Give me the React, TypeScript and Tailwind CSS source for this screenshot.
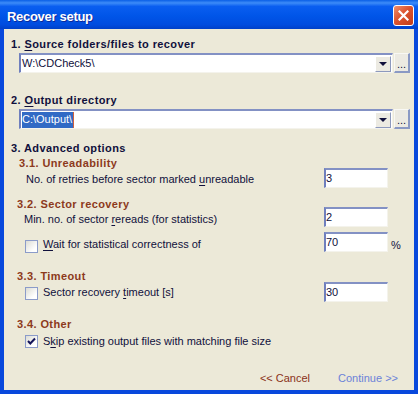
import type { ReactNode } from 'react';

const sans = "font-['Liberation_Sans',Arial,sans-serif]";
const sunken =
  'border-t-2 border-l-2 border-r border-b border-t-[#8391c4] border-l-[#6f7fbd] border-r-[#f4f3ec] border-b-[#f4f3ec] bg-white';

function U({ children }: { children: ReactNode }) {
  return <span className="underline underline-offset-[2px]">{children}</span>;
}

function Field({ value }: { value: string }) {
  return (
    <div className={`${sunken} w-[64px] h-[20px] flex items-center text-[#10103c]`}>{value}</div>
  );
}

function Check({ checked }: { checked?: boolean }) {
  return (
    <div className="w-[13px] h-[13px] shrink-0 border border-[#8b9bc9] bg-[linear-gradient(135deg,#dcdcd4,#ffffff_75%)] flex items-center justify-center">
      {checked && (
        <svg width="9" height="9" viewBox="0 0 9 9">
          <path d="M1 4 L3.3 6.5 L8 1.5" stroke="#14145a" strokeWidth="2" fill="none" />
        </svg>
      )}
    </div>
  );
}

function Combo({ children }: { children: ReactNode }) {
  return (
    <div className="flex ml-[15px] mr-[4px] h-[20px] gap-[1px]">
      <div className={`${sunken} flex-1 flex items-center`}>
        <div className="flex-1 flex items-center h-full pl-[1px]">{children}</div>
        <div className="w-[16px] h-[16px] mr-[1px] bg-[#eceae2] border-t border-l border-r border-b border-t-white border-l-white border-r-[#8d99bd] border-b-[#8d99bd] flex items-center justify-center">
          <div className="w-0 h-0 border-l-[4px] border-r-[4px] border-t-[4px] border-l-transparent border-r-transparent border-t-[#10103c]" />
        </div>
      </div>
      <div className="w-[16px] h-[20px] bg-[#eceae2] border-t border-l border-r-2 border-b-2 border-t-[#f8f8f4] border-l-[#f8f8f4] border-r-[#8a99c4] border-b-[#8a99c4] flex items-end justify-center pb-[2px] leading-[10px] text-[#10103c]">
        ...
      </div>
    </div>
  );
}

export default function App() {
  return (
    <div className={`${sans} w-[418px] h-[394px] bg-[#0848dc] flex flex-col text-[11px] leading-[13px] text-[#10103c]`}>
      <div className="h-[29px] flex items-start bg-[linear-gradient(to_bottom,#0a5fe6_0%,#3d8cf8_10%,#0a5ef0_22%,#0055e8_55%,#004cdf_85%,#0040c8_100%)]">
        <div className="mt-[9px] ml-[7px] text-[13px] leading-[16px] font-bold tracking-[-0.3px] text-white [text-shadow:1px_1px_0_#0b2a9a]">
          Recover setup
        </div>
        <div className="ml-auto mr-[4px] mt-[5px] w-[21px] h-[21px] rounded-[3px] border border-white bg-[linear-gradient(135deg,#f0906c,#dc5430_45%,#c23c18)] flex items-center justify-center">
          <svg width="11" height="11" viewBox="0 0 11 11">
            <path d="M1.5 1.5 L9.5 9.5 M9.5 1.5 L1.5 9.5" stroke="white" strokeWidth="2.2" strokeLinecap="square" />
          </svg>
        </div>
      </div>

      <div className="mx-[4px] h-[361px] bg-[#ece9d8] flex flex-col">
        <div className="mt-[9px] ml-[7px] font-bold tracking-[0.4px]">
          1. <U>S</U>ource folders/files to recover
        </div>
        <div className="mt-[2px]">
          <Combo>W:\CDCheck5\</Combo>
        </div>

        <div className="mt-[21px] ml-[7px] font-bold tracking-[0.4px]">
          2. <U>O</U>utput directory
        </div>
        <div className="mt-[2px]">
          <Combo>
            <span className="bg-[#316ac5] text-white h-[16px] flex items-center pr-[1px]">C:\Output\</span>
            <span className="w-[1px] h-[16px] bg-[#d0603c]" />
          </Combo>
        </div>

        <div className="mt-[13px] ml-[7px] font-bold tracking-[0.4px]">3. Advanced options</div>
        <div className="mt-[2px] ml-[15px] h-[10px] font-bold tracking-[0.4px] text-[#8c3a1c]">3.1. Unreadability</div>
        <div className="mt-[1px] h-[20px] flex">
          <div className="flex-1 pl-[22px] pt-[5px]">
            No. of retries before sector marked <U>u</U>nreadable
          </div>
          <Field value="3" />
          <div className="w-[26px]" />
        </div>

        <div className="mt-[10px] ml-[13px] h-[9px] font-bold tracking-[0.4px] text-[#8c3a1c]">3.2. Sector recovery</div>
        <div className="h-[20px] flex">
          <div className="flex-1 pl-[20px] pt-[6px]">
            Min. no. of sector <U>r</U>ereads (for statistics)
          </div>
          <Field value="2" />
          <div className="w-[26px]" />
        </div>
        <div className="mt-[5px] h-[20px] flex">
          <div className="flex-1 flex items-start pl-[21px]">
            <div className="mt-[8px]">
              <Check />
            </div>
            <div className="ml-[5px] pt-[6px]">
              <U>W</U>ait for statistical correctness of
            </div>
          </div>
          <Field value="70" />
          <div className="w-[26px] pl-[3px] pt-[7px]">%</div>
        </div>

        <div className="mt-[18px] ml-[13px] h-[12px] font-bold tracking-[0.4px] text-[#8c3a1c]">3.3. Timeout</div>
        <div className="h-[20px] flex">
          <div className="flex-1 flex items-start pl-[21px]">
            <div className="mt-[5px]">
              <Check />
            </div>
            <div className="ml-[5px] pt-[4px]">
              Sector recovery <U>t</U>imeout [s]
            </div>
          </div>
          <Field value="30" />
          <div className="w-[26px]" />
        </div>

        <div className="mt-[16px] ml-[13px] font-bold tracking-[0.4px] text-[#8c3a1c]">3.4. Other</div>
        <div className="mt-[3px] h-[14px] flex items-start pl-[21px]">
          <div className="mt-[1px]">
            <Check checked />
          </div>
          <div className="ml-[5px] pt-[1px]">
            S<U>k</U>ip existing output files with matching file size
          </div>
        </div>

        <div className="mt-[24px] flex justify-end gap-[28px] pr-[16px]">
          <span className="text-[#8a3218]">&lt;&lt; Cancel</span>
          <span className="text-[#6b82d8]">Continue &gt;&gt;</span>
        </div>
      </div>
    </div>
  );
}
